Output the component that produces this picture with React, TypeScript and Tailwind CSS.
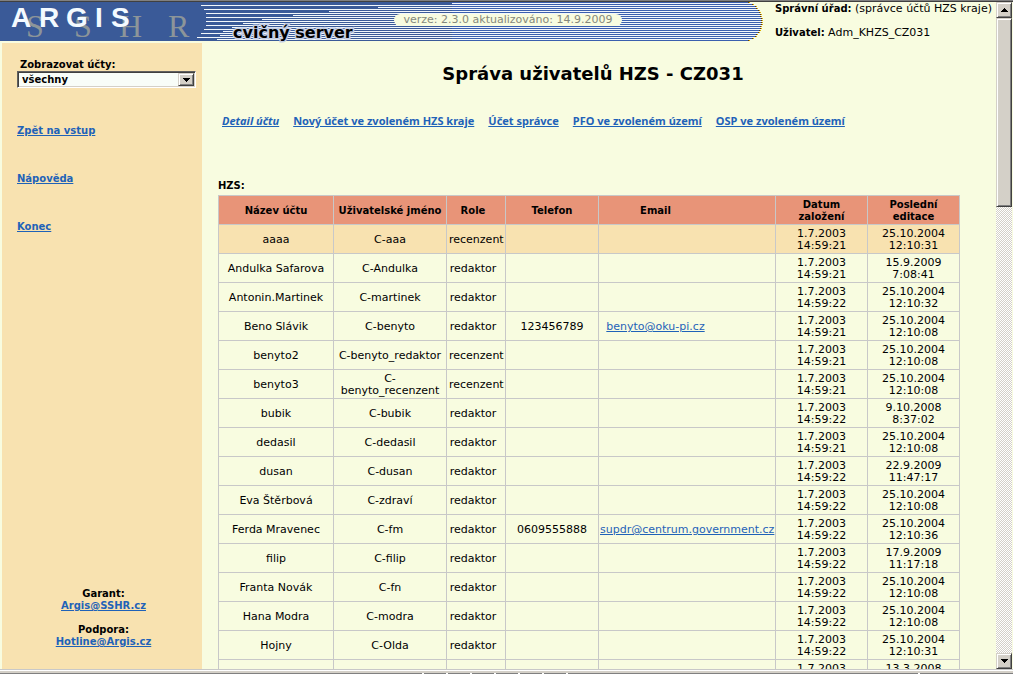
import React from "react";

type Row = {
  name: string;
  user: string;
  role: string;
  phone?: string;
  email?: string;
  created: [string, string];
  edited: [string, string];
};

const rows: Row[] = [
  { name: "aaaa", user: "C-aaa", role: "recenzent", created: ["1.7.2003", "14:59:21"], edited: ["25.10.2004", "12:10:31"] },
  { name: "Andulka Safarova", user: "C-Andulka", role: "redaktor", created: ["1.7.2003", "14:59:21"], edited: ["15.9.2009", "7:08:41"] },
  { name: "Antonin.Martinek", user: "C-martinek", role: "redaktor", created: ["1.7.2003", "14:59:22"], edited: ["25.10.2004", "12:10:32"] },
  { name: "Beno Slávik", user: "C-benyto", role: "redaktor", phone: "123456789", email: "benyto@oku-pi.cz", created: ["1.7.2003", "14:59:21"], edited: ["25.10.2004", "12:10:08"] },
  { name: "benyto2", user: "C-benyto_redaktor", role: "recenzent", created: ["1.7.2003", "14:59:21"], edited: ["25.10.2004", "12:10:08"] },
  { name: "benyto3", user: "C-benyto_recenzent", role: "recenzent", created: ["1.7.2003", "14:59:21"], edited: ["25.10.2004", "12:10:08"] },
  { name: "bubik", user: "C-bubik", role: "redaktor", created: ["1.7.2003", "14:59:22"], edited: ["9.10.2008", "8:37:02"] },
  { name: "dedasil", user: "C-dedasil", role: "redaktor", created: ["1.7.2003", "14:59:21"], edited: ["25.10.2004", "12:10:08"] },
  { name: "dusan", user: "C-dusan", role: "redaktor", created: ["1.7.2003", "14:59:22"], edited: ["22.9.2009", "11:47:17"] },
  { name: "Eva Štěrbová", user: "C-zdraví", role: "redaktor", created: ["1.7.2003", "14:59:22"], edited: ["25.10.2004", "12:10:08"] },
  { name: "Ferda Mravenec", user: "C-fm", role: "redaktor", phone: "0609555888", email: "supdr@centrum.government.cz", created: ["1.7.2003", "14:59:22"], edited: ["25.10.2004", "12:10:36"] },
  { name: "filip", user: "C-filip", role: "redaktor", created: ["1.7.2003", "14:59:22"], edited: ["17.9.2009", "11:17:18"] },
  { name: "Franta Novák", user: "C-fn", role: "redaktor", created: ["1.7.2003", "14:59:22"], edited: ["25.10.2004", "12:10:08"] },
  { name: "Hana Modra", user: "C-modra", role: "redaktor", created: ["1.7.2003", "14:59:22"], edited: ["25.10.2004", "12:10:08"] },
  { name: "Hojny", user: "C-Olda", role: "redaktor", created: ["1.7.2003", "14:59:22"], edited: ["25.10.2004", "12:10:31"] },
  { name: "", user: "", role: "", created: ["1.7.2003", "\u00a0"], edited: ["13.3.2008", "\u00a0"] },
];

// Left end of each light stripe, top to bottom, two pixels apart.
const stripeStarts = [452, 201, 378, 204, 329, 206, 293, 206, 262, 206, 243, 206, 232, 204, 223, 201, 220, 197, 217];

// Right edge of the rounded banner at a given row.
const edge = (y: number) => Math.round(742.4 + Math.sqrt(20.6 * 20.6 - (y - 19) * (y - 19)));

function Banner() {
  return (
    <div className="relative h-[39px] w-[763px] shrink-0">
      <svg className="block" width="763" height="39" viewBox="0 0 763 39" overflow="visible" shapeRendering="crispEdges" role="img" aria-label="ARGIS SSHR">
        <rect width="740" height="39" fill="#3a5a98" />
        {Array.from({ length: 20 }, (_, i) => (
          <g key={i}>
            <rect x="452" y={i * 2} width={edge(i * 2) - 452} height="1" fill="#3a5fae" />
            <rect x={edge(i * 2) - 2} y={i * 2} width="1" height="1" fill="#5a3a10" />
            <rect x={edge(i * 2) - 1} y={i * 2} width="1" height="1" fill="#d8b000" />
          </g>
        ))}
        {stripeStarts.map((x, i) => (
          <rect key={i} x={x} y={i * 2 + 1} width={edge(i * 2 + 1) - x} height="1" fill="#f2f7fb" />
        ))}
        <g fontFamily="Liberation Serif, serif" fontSize="32" fill="#8c9599">
          <text x="26" y="35">S</text>
          <text x="74" y="35">S</text>
          <text x="119" y="35">H</text>
          <text x="168" y="35">R</text>
        </g>
        <g fontFamily="Liberation Sans, sans-serif" fontSize="28" fontWeight="700" fill="#f4faff">
          <text x="11" y="25">A</text>
          <text x="39" y="25">R</text>
          <text x="66" y="25">G</text>
          <text x="95" y="25">I</text>
          <text x="111" y="25">S</text>
        </g>
        <text x="233" y="36" fontFamily="DejaVu Sans, sans-serif" fontSize="16" fontWeight="700" fill="#000" stroke="#c3cde4" strokeWidth="3" paintOrder="stroke" shapeRendering="auto">
          cvičný server
        </text>
      </svg>
      <span className="absolute left-[394px] top-3 h-3 w-[228px] whitespace-nowrap rounded-full bg-[#f8fce0] text-center text-[11px] leading-3 text-[#84887c]">
        verze: 2.3.0 aktualizováno: 14.9.2009
      </span>
    </div>
  );
}

function Arrow({ up }: { up?: boolean }) {
  return (
    <svg width="7" height="4" viewBox="0 0 7 4" shapeRendering="crispEdges" aria-hidden="true">
      <path d={up ? "M3 0h1v1h1v1h1v1h1v1H0V3h1V2h1V1h1z" : "M0 0h7v1H6v1H5v1H4v1H3V3H2V2H1V1H0z"} fill="#000" />
    </svg>
  );
}

const raised =
  "border border-t-[#d4d0c8] border-l-[#d4d0c8] border-b-[#404040] border-r-[#404040] bg-[#d4d0c8] shadow-[inset_1px_1px_0_#fff,inset_-1px_-1px_0_#808080]";
const link = "text-[#1f62b8] underline";
const cell = "border border-[#c8c8c8] px-0 pb-0 pt-0.5";
const roleCell = "whitespace-nowrap border border-[#c8c8c8] pb-0 pl-0.5 pr-2 pt-0.5";
const emailCell = "whitespace-nowrap border border-[#c8c8c8] pb-0 pl-px pr-16 pt-0.5";

function Scrollbar() {
  return (
    <div className="mr-px flex w-4 shrink-0 flex-col bg-[conic-gradient(#d4d0c8_25%,#fff_0_50%,#d4d0c8_0_75%,#fff_0)] bg-[length:2px_2px]">
      <button type="button" aria-label="Nahoru" className={"flex h-4 shrink-0 items-center justify-center " + raised}>
        <Arrow up />
      </button>
      <div className={"h-[189px] shrink-0 " + raised} />
      <div className="flex-1" />
      <button type="button" aria-label="Dolů" className={"flex h-4 shrink-0 items-center justify-center " + raised}>
        <Arrow />
      </button>
    </div>
  );
}

function Sidebar() {
  return (
    <aside className="ml-0.5 flex w-[200px] shrink-0 flex-col bg-[#f8e2b0] pb-[21px] pl-[15px] pr-1.5 pt-4 font-bold">
      <label htmlFor="filter" className="ml-[3px]">Zobrazovat účty:</label>
      <div className="relative">
        <select
          id="filter"
          className="block h-[17px] w-full appearance-none border border-b-white border-l-[#606060] border-r-white border-t-[#606060] bg-[#f8fdf8] pl-1 font-bold shadow-[inset_1px_1px_0_#404040,inset_-1px_-1px_0_#d4d0c8]"
        >
          <option>všechny</option>
        </select>
        <span className={"pointer-events-none absolute bottom-0.5 right-0.5 top-0.5 flex w-4 items-center justify-center " + raised}>
          <Arrow />
        </span>
      </div>
      <nav className="mt-[37px] flex flex-col items-start gap-9">
        <a href="#vstup" className={link}>Zpět na vstup</a>
        <a href="#napoveda" className={link}>Nápověda</a>
        <a href="#konec" className={link}>Konec</a>
      </nav>
      <div className="mr-1.5 mt-auto flex flex-col gap-3 text-center">
        <p>Garant:<br /><a href="mailto:Argis@SSHR.cz" className={link}>Argis@SSHR.cz</a></p>
        <p>Podpora:<br /><a href="mailto:Hotline@Argis.cz" className={link}>Hotline@Argis.cz</a></p>
      </div>
    </aside>
  );
}

function Accounts() {
  return (
    <table className="w-[742px] table-fixed border-collapse text-center text-[11px]">
      <caption className="pb-[3px] text-left text-[10px] font-bold">HZS:</caption>
      <colgroup>
        <col className="w-[115px]" />
        <col className="w-[113px]" />
        <col className="w-[59px]" />
        <col className="w-[93px]" />
        <col className="w-[177px]" />
        <col className="w-[92px]" />
        <col className="w-[92px]" />
      </colgroup>
      <thead className="bg-[#e89478] text-[10px]">
        <tr className="h-[29px]">
          <th className={cell}>Název účtu</th>
          <th className={cell}>Uživatelské jméno</th>
          <th className={roleCell}>Role</th>
          <th className={cell}>Telefon</th>
          <th className={emailCell}>Email</th>
          <th className={cell}>Datum<br />založení</th>
          <th className={cell}>Poslední<br />editace</th>
        </tr>
      </thead>
      <tbody>
        {rows.map((r, i) => (
          <tr key={i} className={i === 0 ? "h-[29px] bg-[#f8e2b0]" : "h-[29px]"}>
            <td className={cell}>{r.name}</td>
            <td className="border border-[#c8c8c8] px-1 pb-0 pt-0.5">{r.user}</td>
            <td className={roleCell}>{r.role}</td>
            <td className={cell}>{r.phone}</td>
            <td className={emailCell}>
              {r.email && <a href={"mailto:" + r.email} className={link}>{r.email}</a>}
            </td>
            <td className={cell}>{r.created[0]}<br />{r.created[1]}</td>
            <td className={cell}>{r.edited[0]}<br />{r.edited[1]}</td>
          </tr>
        ))}
      </tbody>
    </table>
  );
}

export default function App() {
  return (
    <div className="flex h-screen flex-col overflow-hidden bg-[#f8fce0] font-['DejaVu_Sans',sans-serif] text-[10px] leading-3 text-black">
      <div className="h-0.5 shrink-0 border-b border-[#404040] bg-[#808080]" />
      <div className="flex min-h-0 flex-1">
        <div className="flex min-w-0 flex-1 flex-col">
          <header className="flex h-[41px] shrink-0 gap-3">
            <Banner />
            <div className="flex flex-col gap-3 whitespace-nowrap pt-px text-[11px]">
              <p><b className="text-[10px]">Správní úřad:</b> (správce účtů HZS kraje)</p>
              <p><b className="text-[10px]">Uživatel:</b> Adm_KHZS_CZ031</p>
            </div>
          </header>
          <div className="flex min-h-0 flex-1">
            <Sidebar />
            <main className="min-w-0 flex-1 overflow-hidden pl-4 pr-7">
              <h1 className="mt-[17px] text-center text-lg font-bold">Správa uživatelů HZS - CZ031</h1>
              <nav className="mb-[53px] mt-[27px] flex gap-3.5 whitespace-nowrap pl-1 font-['Noto_Sans',sans-serif] text-[11px] font-bold">
                <a href="#detail" className={link + " italic"}>Detail účtu</a>
                <a href="#novy" className={link}>Nový účet ve zvoleném HZS kraje</a>
                <a href="#spravce" className={link}>Účet správce</a>
                <a href="#pfo" className={link}>PFO ve zvoleném území</a>
                <a href="#osp" className={link}>OSP ve zvoleném území</a>
              </nav>
              <Accounts />
            </main>
          </div>
        </div>
        <Scrollbar />
      </div>
      <div className="h-1 shrink-0 border-t border-[#c8c8c8] bg-[#d4d0c8] shadow-[inset_0_1px_0_#fff]" />
      <div className="flex h-px shrink-0 gap-0.5 bg-white">
        <div className="w-[422px] bg-[#808080]" />
        {Array.from({ length: 6 }, (_, i) => (
          <div key={i} className="w-[22px] bg-[#808080]" />
        ))}
        <div className="w-[350px] bg-[#808080]" />
        <div className="flex-1 bg-[#808080]" />
      </div>
    </div>
  );
}
